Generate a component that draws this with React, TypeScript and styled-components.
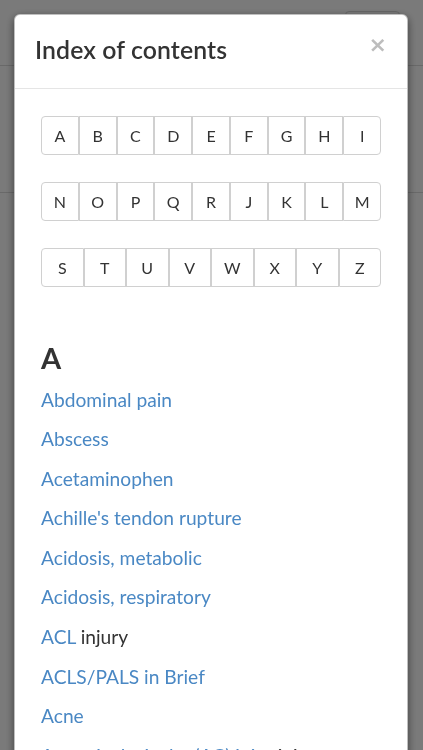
import React from "react";
import styled, { createGlobalStyle } from "styled-components";

const Global = createGlobalStyle`
  html, body { margin: 0; padding: 0; height: 100%; overflow: hidden; }
  body { font-family: Lato, "Open Sans", sans-serif; background: #fff; -webkit-font-smoothing: antialiased; }
`;

const Page = styled.div`
  height: 750px;
  background: #fff;
`;

const PageHeader = styled.div`
  height: 66px;
  border-bottom: 1px solid #dcdcdc;
  display: flex;
  justify-content: flex-end;
  align-items: flex-start;
  padding: 11px 23px 0 0;
  box-sizing: border-box;
`;

const PageButton = styled.div`
  width: 55px;
  height: 30px;
  border: 1px solid #d8d8d8;
  border-radius: 4px;
  box-sizing: border-box;
`;

const PageSection = styled.div`
  height: 126px;
  border-bottom: 1px solid #dcdcdc;
`;

const Backdrop = styled.div`
  position: fixed;
  inset: 0;
  background: rgba(0, 0, 0, 0.52);
`;

const Modal = styled.div`
  position: fixed;
  top: 14px;
  left: 14px;
  width: 394px;
  height: 760px;
  box-sizing: border-box;
  background: #fff;
  border: 1px solid rgba(0, 0, 0, 0.25);
  border-radius: 6px;
  box-shadow: 0 3px 9px rgba(0, 0, 0, 0.5);
  overflow: hidden;
`;

const Header = styled.div`
  height: 74px;
  box-sizing: border-box;
  border-bottom: 1px solid #e5e5e5;
  display: flex;
  align-items: center;
  justify-content: space-between;
  padding: 0 20px 4px 20px;
`;

const Title = styled.h4`
  margin: 0;
  font-size: 24.8px;
  font-weight: 600;
  color: #333;
  letter-spacing: 0.1px;
`;

const Close = styled.span`
  font-family: "DejaVu Sans", sans-serif;
  font-size: 22px;
  font-weight: 700;
  color: #bdbdbd;
  line-height: 1;
  margin-top: -10px;
`;

const Body = styled.div`
  padding: 27px 26px 0 26px;
`;

const Letters = styled.div`
  display: flex;
  flex-direction: column;
  gap: 27.5px;
`;

const LetterRow = styled.div`
  display: flex;
  height: 38.5px;
`;

const Letter = styled.div`
  flex: 1;
  display: flex;
  align-items: center;
  justify-content: center;
  border: 1px solid #d0d0d0;
  background: #fff;
  font-size: 16px;
  color: #333;
  box-sizing: border-box;
  &:first-child { border-radius: 4px 0 0 4px; }
  &:last-child { border-radius: 0 4px 4px 0; }
`;

const SectionHead = styled.h2`
  margin: 54px 0 0 0;
  font-size: 29px;
  line-height: 34px;
  font-weight: 700;
  color: #333;
`;

const List = styled.div`
  margin-top: 5px;
`;

const Item = styled.div`
  font-size: 19.2px;
  line-height: 39.6px;
  height: 39.6px;
  color: #333;
  white-space: nowrap;
`;

const Link = styled.span`
  color: #4a88c4;
`;

const rows = [
  ["A", "B", "C", "D", "E", "F", "G", "H", "I"],
  ["N", "O", "P", "Q", "R", "J", "K", "L", "M"],
  ["S", "T", "U", "V", "W", "X", "Y", "Z"],
];

const items: [string, string][] = [
  ["Abdominal pain", ""],
  ["Abscess", ""],
  ["Acetaminophen", ""],
  ["Achille's tendon rupture", ""],
  ["Acidosis, metabolic", ""],
  ["Acidosis, respiratory", ""],
  ["ACL", " injury"],
  ["ACLS/PALS in Brief", ""],
  ["Acne", ""],
  ["Acromioclavicular (AC) joint", " injury"],
];

export default function App() {
  return (
    <>
      <Global />
      <Page>
        <PageHeader>
          <PageButton />
        </PageHeader>
        <PageSection />
      </Page>
      <Backdrop />
      <Modal>
        <Header>
          <Title>Index of contents</Title>
          <Close>×</Close>
        </Header>
        <Body>
          <Letters>
            {rows.map((r, i) => (
              <LetterRow key={i}>
                {r.map((l) => (
                  <Letter key={l}>{l}</Letter>
                ))}
              </LetterRow>
            ))}
          </Letters>
          <SectionHead>A</SectionHead>
          <List>
            {items.map(([a, b]) => (
              <Item key={a}>
                <Link>{a}</Link>
                {b}
              </Item>
            ))}
          </List>
        </Body>
      </Modal>
    </>
  );
}
